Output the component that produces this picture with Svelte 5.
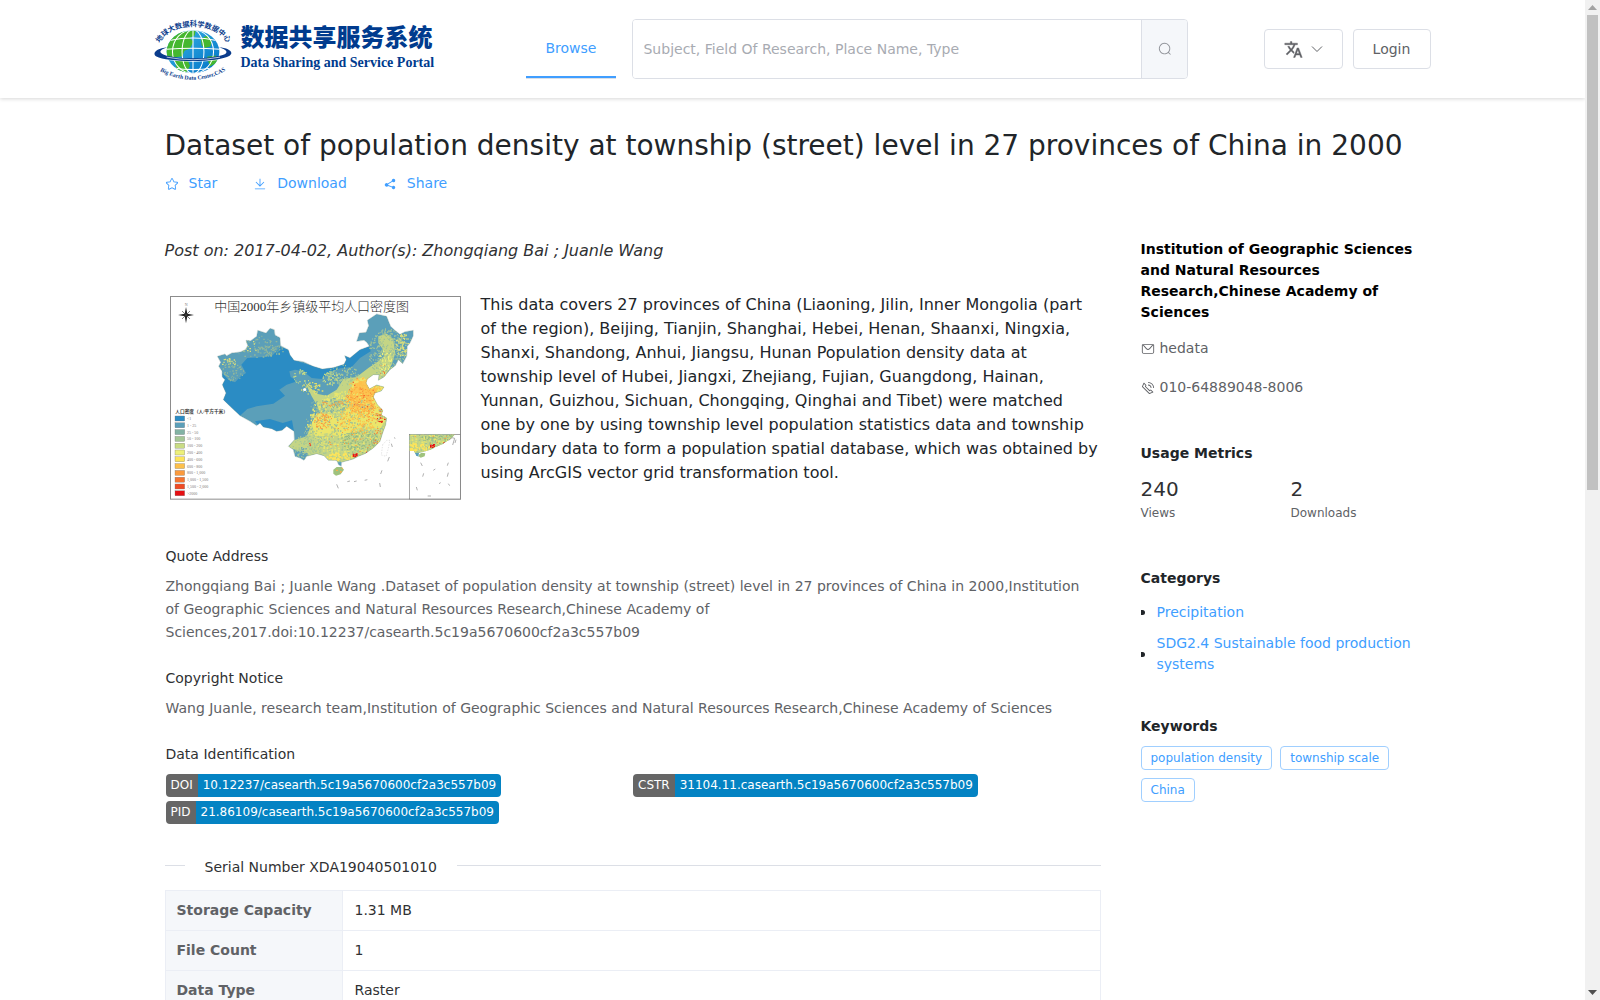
<script lang="ts">
	const icons = {
		star: 'm512 747.84 228.16 119.936a6.4 6.4 0 0 0 9.28-6.72l-43.52-254.08 184.512-179.904a6.4 6.4 0 0 0-3.52-10.88l-255.104-37.12L517.76 147.904a6.4 6.4 0 0 0-11.52 0L392.192 379.072l-255.104 37.12a6.4 6.4 0 0 0-3.52 10.88L318.08 606.976l-43.584 254.08a6.4 6.4 0 0 0 9.28 6.72zM313.6 924.48a70.4 70.4 0 0 1-102.144-74.24l37.888-220.928L88.96 472.96A70.4 70.4 0 0 1 128 352.896l221.76-32.256 99.2-200.96a70.4 70.4 0 0 1 126.208 0l99.2 200.96 221.824 32.256a70.4 70.4 0 0 1 39.04 120.064L774.72 629.376l37.888 220.928a70.4 70.4 0 0 1-102.144 74.24L512 820.096l-198.4 104.32z',
		download:
			'M160 832h704a32 32 0 1 1 0 64H160a32 32 0 1 1 0-64m384-253.696 236.288-236.352 45.248 45.248L508.8 704 192 387.2l45.248-45.248L480 584.704V128h64z',
		share: 'm679.872 348.8-301.76 188.608a127.8 127.8 0 0 1 5.12 52.16l279.936 104.96a128 128 0 1 1-22.464 59.904l-279.872-104.96a128 128 0 1 1-16.64-166.272l301.696-188.608a128 128 0 1 1 33.92 54.272z',
		search: 'm795.904 750.72 124.992 124.928a32 32 0 0 1-45.248 45.248L750.656 795.904a416 416 0 1 1 45.248-45.248zM480 832a352 352 0 1 0 0-704 352 352 0 0 0 0 704',
		message:
			'M128 224v512a64 64 0 0 0 64 64h640a64 64 0 0 0 64-64V224zm0-64h768a64 64 0 0 1 64 64v512a128 128 0 0 1-128 128H192A128 128 0 0 1 64 736V224a64 64 0 0 1 64-64M904 224 656.512 506.88a192 192 0 0 1-289.024 0L120 224zm-698.944 0 210.56 240.704a128 128 0 0 0 192.704 0L818.944 224z',
		phone: 'M79.36 432.256 591.744 944.64a32 32 0 0 0 35.2 6.784l253.44-108.544a32 32 0 0 0 9.984-52.032l-153.856-153.92a32 32 0 0 0-36.928-6.016l-69.888 34.944L358.08 394.24l35.008-69.888a32 32 0 0 0-5.952-36.928L233.152 133.568a32 32 0 0 0-52.032 10.048L72.512 397.056a32 32 0 0 0 6.784 35.2zm60.48-29.952 81.536-190.08L325.568 316.48l-24.64 49.216-20.608 41.216 32.576 32.64 271.552 271.552 32.64 32.64 41.216-20.672 49.28-24.576 104.192 104.128-190.08 81.472zM512 320v-64a256 256 0 0 1 256 256h-64a192 192 0 0 0-192-192m0-192V64a448 448 0 0 1 448 448h-64a384 384 0 0 0-384-384'
	};
	type IconName = keyof typeof icons;

	const actions: { icon: IconName; label: string }[] = [
		{ icon: 'star', label: 'Star' },
		{ icon: 'download', label: 'Download' },
		{ icon: 'share', label: 'Share' }
	];

	const identifiers = [
		{ kind: 'DOI', value: '10.12237/casearth.5c19a5670600cf2a3c557b09' },
		{ kind: 'CSTR', value: '31104.11.casearth.5c19a5670600cf2a3c557b09' },
		{ kind: 'PID', value: '21.86109/casearth.5c19a5670600cf2a3c557b09' }
	];

	const properties = [
		{ name: 'Storage Capacity', value: '1.31 MB' },
		{ name: 'File Count', value: '1' },
		{ name: 'Data Type', value: 'Raster' }
	];

	const categories = ['Precipitation', 'SDG2.4 Sustainable food production systems'];
	const keywords = ['population density', 'township scale', 'China'];

	const legend = [
		{ color: '#2b8cc4', label: '<1' },
		{ color: '#5b9fb9', label: '1 - 25' },
		{ color: '#83b3a4', label: '25 - 50' },
		{ color: '#a5c795', label: '50 - 100' },
		{ color: '#c9dc84', label: '100 - 200' },
		{ color: '#edf07a', label: '200 - 400' },
		{ color: '#fde45a', label: '400 - 600' },
		{ color: '#fdc04a', label: '600 - 800' },
		{ color: '#fb9a3c', label: '800 - 1,000' },
		{ color: '#f6742f', label: '1,000 - 1,500' },
		{ color: '#f04b24', label: '1,500 - 2,000' },
		{ color: '#e60f12', label: '>2000' }
	];

	const mainland =
		'M172 200L195 193L200 198L215 190L240 187L256 180L263 168L258 152L272 153L290 140L293 122L318 130L330 116L343 120L345 136L360 144L362 168L385 180L390 196L402 212L430 216L460 230L487 238L520 234L552 224L559 210L554 198L570 205L600 180L628 170L620 158L612 152L590 155L598 130L618 128L626 108L622 92L650 73L680 80L692 110L705 122L720 134L735 126L760 122L760 138L750 160L742 170L740 200L728 222L715 210L706 228L690 240L672 262L655 272L657 255L640 255L622 268L618 280L628 298L650 286L672 292L664 304L645 310L640 322L652 345L668 362L664 376L680 385L677 405L668 430L660 455L640 475L615 492L595 500L580 508L545 518L544 530L536 526L530 512L505 512L492 498L470 492L440 500L432 512L420 505L405 500L400 480L385 470L403 450L402 425L380 410L366 422L350 425L335 417L310 412L300 400L290 408L270 395L240 378L210 350L190 330L198 310L187 285L195 270L187 262L186 245L176 230L182 218Z';

	// small seeded generator, so the grain of the map stays the same between renders
	function mulberry(seed: number) {
		return () => {
			seed = (seed + 0x6d2b79f5) | 0;
			let t = Math.imul(seed ^ (seed >>> 15), 1 | seed);
			t = (t + Math.imul(t ^ (t >>> 7), 61 | t)) ^ t;
			return ((t ^ (t >>> 14)) >>> 0) / 4294967296;
		};
	}

	// [cx, cy, rx, ry, count, size, colour]
	const zones: [number, number, number, number, number, number, string][] = [
		[280, 170, 80, 35, 80, 5, '#8fb79c'],
		[265, 168, 40, 16, 16, 5, '#d9de7c'],
		[204, 216, 24, 12, 26, 5, '#d9de7c'],
		[215, 245, 35, 30, 60, 5, '#8fb79c'],
		[330, 180, 40, 18, 50, 5, '#8fb79c'],
		[425, 260, 26, 22, 24, 5, '#c9dc84'],
		[455, 295, 34, 18, 50, 5, '#e2df6c'],
		[510, 265, 24, 22, 50, 5, '#c9dc84'],
		[545, 255, 50, 30, 100, 5, '#a5c795'],
		[680, 190, 55, 75, 320, 5, '#9fc298'],
		[730, 165, 26, 36, 90, 5, '#d9de7c'],
		[560, 400, 120, 100, 600, 6, '#e9e66d'],
		[560, 420, 130, 95, 450, 5, '#9fc298'],
		[510, 345, 60, 22, 90, 5, '#83b3a4'],
		[600, 455, 60, 35, 130, 5, '#93b983'],
		[440, 470, 45, 35, 120, 5, '#a5c795'],
		[420, 490, 25, 20, 30, 5, '#5b9fb9'],
		[605, 320, 50, 60, 300, 5, '#fdc04a'],
		[600, 330, 45, 40, 130, 4, '#fb9a3c'],
		[645, 300, 35, 14, 50, 5, '#fdc04a'],
		[590, 390, 55, 45, 150, 5, '#fdc04a'],
		[487, 392, 28, 25, 80, 4, '#fb9a3c'],
		[515, 340, 35, 10, 30, 4, '#fb9a3c'],
		[640, 370, 35, 30, 70, 4, '#fb9a3c'],
		[600, 310, 45, 55, 20, 4, '#f04b24'],
		[663, 375, 14, 22, 20, 5, '#e6341c'],
		[655, 450, 18, 38, 20, 4, '#f6742f'],
		[580, 440, 90, 60, 40, 4, '#fb9a3c'],
		[540, 500, 40, 12, 60, 6, '#fde45a'],
		[585, 495, 10, 5, 14, 5, '#e60f12'],
		[618, 487, 5, 3, 4, 5, '#e60f12'],
		[448, 464, 4, 5, 5, 4, '#f04b24'],
		[675, 220, 20, 45, 60, 5, '#edf07a'],
		[668, 235, 14, 24, 8, 4, '#f6742f']
	];

	const rand = mulberry(2000);
	const grain = zones.map(([cx, cy, rx, ry, count, size, color]) => {
		let d = '';
		for (let i = 0; i < count; i++) {
			const a = rand() * Math.PI * 2;
			const r = Math.sqrt(rand());
			const x = Math.round(cx + Math.cos(a) * rx * r);
			const y = Math.round(cy + Math.sin(a) * ry * r);
			const w = 2 + Math.round(rand() * (size - 2));
			d += `M${x} ${y}h${w}v${size - 1}h-${w}z`;
		}
		return { d, color };
	});
</script>

{#snippet icon(name: IconName)}
	<svg class="icon" viewBox="0 0 1024 1024" aria-hidden="true"><path d={icons[name]} /></svg>
{/snippet}

{#snippet terrain()}
	<path d={mainland} fill="#5b9fb9" />
	<path
		fill="#2b8cc4"
		d="M186 250L205 270L225 278L240 262L258 250L244 225L262 205L300 203L335 200L362 172L385 180L402 212L487 238L552 224L556 200L600 180L628 170L632 185L600 205L575 232L540 236L505 250L485 268L455 265L430 245L405 240L388 245L392 262L412 275L380 285L358 300L375 318L340 342L290 350L262 358L240 378L210 350L188 330Z"
	/>
	<path fill="#2b8cc4" d="M285 395L330 388L368 400L396 392L402 425L350 430L300 415Z" />
	<path
		fill="#c4d585"
		d="M436 280L470 312L500 318L530 300L550 268L590 262L625 235L655 215L672 200L668 178L655 160L655 140L680 132L700 148L706 190L695 225L660 285L690 290L660 320L690 390L660 470L580 515L500 520L430 490L385 472L402 452L440 440L458 395L482 376L470 345L455 320Z"
	/>
	<path
		fill="#ece56a"
		d="M580 275L610 262L640 290L680 290L645 315L680 380L660 420L620 410L580 420L550 445L500 430L465 440L455 400L470 370L520 375L545 390L560 340Z"
	/>
	<path fill="#fcc653" d="M585 282L618 270L625 298L650 296L635 322L640 350L610 362L568 345L570 320Z" />
	{#each grain as patch}
		<path d={patch.d} fill={patch.color} />
	{/each}
{/snippet}

<div class="viewport">
	<div class="page">
		<header class="topbar">
			<div class="container topbar-row">
				<a class="brand" href="#home" aria-label="Data Sharing and Service Portal">
					<svg class="globe" viewBox="0 0 234 186" aria-hidden="true">
						<defs>
							<clipPath id="earth"><ellipse cx="117" cy="95" rx="77" ry="63" /></clipPath>
							<linearGradient id="sea" x1="0" y1="0" x2="1" y2="1">
								<stop offset="0" stop-color="#39b5e6" />
								<stop offset="1" stop-color="#0072c6" />
							</linearGradient>
							<path id="arc-top" d="M23 64A103 70 0 0 1 213 64" />
							<path id="arc-bottom" d="M22 152Q117 203 211 151" />
						</defs>
						<ellipse cx="117" cy="95" rx="77" ry="63" fill="url(#sea)" />
						<g clip-path="url(#earth)">
							<path
								d="M30 110L48 55L75 38L125 32L122 48L108 54L118 66L108 86L92 92L86 108L62 112ZM62 114L100 116L108 136L96 160L70 150ZM140 58L158 48L172 60L168 80L150 84L142 76ZM158 110L184 106L190 126L166 138Z"
								fill="#45b72f"
							/>
							<g fill="none" stroke="#fff" stroke-width="3">
								<path d="M117 30V160" />
								<ellipse cx="117" cy="95" rx="32" ry="64" />
								<ellipse cx="117" cy="95" rx="60" ry="64" />
								<path d="M48 62Q117 48 186 62M38 88Q117 82 196 88M42 118Q117 128 192 118M60 143Q117 152 174 143" />
							</g>
						</g>
						<path
							d="M42 82C8 86-4 100 10 109C40 126 190 128 224 107C238 97 222 84 192 82C226 92 218 102 196 107C150 117 80 117 40 107C16 100 14 91 42 82Z"
							fill="#0a3c8c"
						/>
						<path d="M40 111Q117 126 196 111" fill="none" stroke="#fff" stroke-width="2" />
						<text class="globe-cn"><textPath href="#arc-top" startOffset="50%">地球大数据科学数据中心</textPath></text>
						<text class="globe-en"><textPath href="#arc-bottom" startOffset="50%">Big Earth Data Center,CAS</textPath></text>
					</svg>
					<span class="brand-text">
						<span class="brand-cn">数据共享服务系统</span>
						<span class="brand-en">Data Sharing and Service Portal</span>
					</span>
				</a>

				<nav class="menu">
					<a class="menu-item" href="#browse">Browse</a>
				</nav>

				<form class="search" role="search">
					<input
						type="text"
						aria-label="Search datasets"
						placeholder="Subject, Field Of Research, Place Name, Type"
					/>
					<button type="button" aria-label="Search">{@render icon('search')}</button>
				</form>

				<div class="account">
					<button class="btn" type="button" aria-label="Language">
						<svg class="translate" viewBox="0 0 24 24" aria-hidden="true">
							<path
								d="M12.87 15.07l-2.54-2.51.03-.03c1.74-1.94 2.98-4.17 3.71-6.53H17V4h-7V2H8v2H1v1.99h11.17C11.5 7.92 10.44 9.75 9 11.35 8.07 10.32 7.3 9.19 6.69 8h-2c.73 1.63 1.73 3.17 2.98 4.56l-5.09 5.02L4 19l5-5 3.11 3.11.76-2.04zM18.5 10h-2L12 22h2l1.12-3h4.75L21 22h2l-4.5-12zm-2.62 7l1.62-4.33L19.12 17h-3.24z"
							/>
						</svg>
						<svg class="chevron" viewBox="0 0 12 12" aria-hidden="true"><path d="M1 3.5L6 8.5L11 3.5" /></svg>
					</button>
					<button class="btn" type="button">Login</button>
				</div>
			</div>
		</header>

		<main class="container content">
			<h1>Dataset of population density at township (street) level in 27 provinces of China in 2000</h1>
			<div class="actions">
				{#each actions as action}
					<a href="#{action.icon}">{@render icon(action.icon)}{action.label}</a>
				{/each}
			</div>

			<div class="columns">
				<article>
					<p class="byline">Post on: 2017-04-02, Author(s): Zhongqiang Bai ; Juanle Wang</p>

					<div class="summary">
						<svg class="map" viewBox="30 19 873 611" role="img" aria-label="中国2000年乡镇级平均人口密度图">
							<defs>
								<clipPath id="china"><path d={mainland} /></clipPath>
								<clipPath id="inset"><rect x="749" y="435" width="152" height="193" /></clipPath>
							</defs>
							<rect x="31.5" y="20.5" width="870" height="608" fill="#fff" stroke="#8c8c8c" stroke-width="3" />
							<text class="map-title" x="455" y="64">中国2000年乡镇级平均人口密度图</text>
							<text class="map-small" x="74" y="48">N</text>
							<path d="M78 52L82 72L102 76L82 80L78 101L74 80L54 76L74 72Z" fill="#222" />
							<path d="M66 64L90 88M90 64L66 88" stroke="#444" stroke-width="2" />

							<g clip-path="url(#china)">{@render terrain()}</g>
							<path d={mainland} fill="none" stroke="#7f9a92" stroke-width="1" />
							<ellipse cx="434" cy="300" rx="5" ry="4" fill="#fff" />
							<path d="M520 540L530 532L545 532L552 540L542 554L528 558L520 552Z" fill="#9fc27d" />
							<path d="M528 540h6v4h-6zM540 544h5v5h-5zM545 534h4v3h-4z" fill="#f6b24a" />
							<path
								d="M668 465L680 452L690 452L684 480L678 500L664 496Z"
								fill="none"
								stroke="#aaa"
								stroke-dasharray="4 4"
							/>
							<path
								d="M694 462L697 472M702 444l4 2M688 502L683 515M666 542L662 553M659 580L661 592M530 584L535 596M562 576l8-2M582 576l8-2M614 572l8-2"
								stroke="#888"
								stroke-width="2"
							/>

							<text class="map-caption" x="46" y="369">人口密度（人/平方千米）</text>
							{#each legend as entry, i}
								<rect x="45" y={379 + i * 20.4} width="29" height="15" fill={entry.color} stroke="#777" />
								<text class="map-small" x="81" y={391 + i * 20.4}>{entry.label}</text>
							{/each}

							<rect x="748" y="434" width="153" height="194" fill="#fff" stroke="#777" stroke-width="2" />
							<g clip-path="url(#inset)">
								<g transform="translate(232 -28)">
									<g clip-path="url(#china)">{@render terrain()}</g>
								</g>
								<path d="M778 494L785 489L796 491L794 500L782 504L776 500Z" fill="#9fc27d" />
								<path
									d="M866 452l10-8 8 2-6 20M888 450l-3 10M782 519l5 10M865 519l-3 9M865 549l-3 12M791 551l-3 10M769 592l3 10M837 582l5-3M865 582l4 6M803 619l10 0M820 542l6-4"
									fill="none"
									stroke="#888"
									stroke-width="2"
								/>
							</g>
						</svg>
						<p>
							This data covers 27 provinces of China (Liaoning, Jilin, Inner Mongolia (part of the region),
							Beijing, Tianjin, Shanghai, Hebei, Henan, Shaanxi, Ningxia, Shanxi, Shandong, Anhui, Jiangsu,
							Hunan Population density data at township level of Hubei, Jiangxi, Zhejiang, Fujian, Guangdong,
							Hainan, Yunnan, Guizhou, Sichuan, Chongqing, Qinghai and Tibet) were matched one&nbsp;by one by
							using township level population statistics data and township boundary data to form a
							population spatial database, which was obtained by using ArcGIS vector grid transformation
							tool.
						</p>
					</div>

					<section class="note">
						<h2>Quote Address</h2>
						<p>
							Zhongqiang Bai ; Juanle Wang .Dataset of population density at township (street) level in 27
							provinces of China in 2000,Institution of&nbsp;Geographic Sciences and Natural Resources
							Research,Chinese Academy of Sciences,2017.doi:10.12237/casearth.5c19a5670600cf2a3c557b09
						</p>
					</section>
					<section class="note">
						<h2>Copyright Notice</h2>
						<p>
							Wang Juanle, research team,Institution of Geographic Sciences and Natural Resources
							Research,Chinese Academy of Sciences
						</p>
					</section>
					<section class="note">
						<h2>Data Identification</h2>
						<div class="badges">
							{#each identifiers as id}
								<div class="badge"><span class="kind">{id.kind}</span><span class="value">{id.value}</span></div>
							{/each}
						</div>
					</section>

					<div class="divider"><span>Serial Number XDA19040501010</span></div>

					<table>
						<tbody>
							{#each properties as row}
								<tr>
									<th scope="row">{row.name}</th>
									<td>{row.value}</td>
								</tr>
							{/each}
						</tbody>
					</table>
				</article>

				<aside>
					<section class="contact">
						<h2>Institution of Geographic Sciences and Natural Resources Research,Chinese Academy of Sciences</h2>
						<p>{@render icon('message')}hedata</p>
						<p>{@render icon('phone')}010-64889048-8006</p>
					</section>
					<section>
						<h2>Usage Metrics</h2>
						<dl>
							<div><dd>240</dd><dt>Views</dt></div>
							<div><dd>2</dd><dt>Downloads</dt></div>
						</dl>
					</section>
					<section>
						<h2>Categorys</h2>
						<ul class="categories">
							{#each categories as category}
								<li><a href="#category">{category}</a></li>
							{/each}
						</ul>
					</section>
					<section>
						<h2>Keywords</h2>
						<div class="tags">
							{#each keywords as keyword}
								<span class="tag">{keyword}</span>
							{/each}
						</div>
					</section>
				</aside>
			</div>
		</main>
	</div>

	<div class="scrollbar" aria-hidden="true">
		<svg viewBox="0 0 15 15"><path d="M3 10L7.5 5L12 10Z" fill="#a3a3a3" /></svg>
		<div class="track"><div class="thumb"></div></div>
		<svg viewBox="0 0 15 15"><path d="M3 5L7.5 10L12 5Z" fill="#505050" /></svg>
	</div>
</div>

<style>
	:global(body) {
		margin: 0;
		background: #fff;
		color: #212529;
		font-family: 'DejaVu Sans', 'Noto Sans CJK SC', sans-serif;
		font-size: 14px;
		line-height: 21px;
	}

	:global(*) {
		box-sizing: border-box;
	}

	a {
		color: #409eff;
		text-decoration: none;
	}

	h1,
	h2,
	p,
	ul,
	dl,
	dd {
		margin: 0;
		padding: 0;
	}

	button,
	input {
		font: inherit;
	}

	.viewport {
		display: flex;
		height: 100vh;
		overflow: hidden;
	}

	.page {
		flex: 1;
		min-width: 0;
		overflow: hidden;
	}

	.container {
		max-width: 1280px;
		margin: 0 auto;
	}

	.icon {
		width: 14px;
		height: 14px;
		flex: none;
		fill: currentColor;
	}

	/* top bar */
	.topbar {
		background: #fff;
		box-shadow: 0 1px 4px rgba(0, 0, 0, 0.16);
	}

	.topbar-row {
		display: grid;
		grid-template-columns: 373px auto minmax(0, 556px) 1fr;
		align-items: center;
		height: 98px;
	}

	.brand {
		display: flex;
		align-items: center;
		gap: 8px;
		color: #003b8e;
	}

	.globe {
		width: 80px;
		height: 64px;
		margin-top: 4px;
	}

	.globe-cn,
	.globe-en {
		fill: #0a3c8c;
		text-anchor: middle;
		font-weight: 700;
	}

	.globe-cn {
		font-family: 'Noto Sans CJK SC', sans-serif;
		font-size: 21px;
	}

	.globe-en {
		font-family: 'Liberation Serif', serif;
		font-size: 17px;
	}

	.brand-text {
		display: flex;
		flex-direction: column;
	}

	.brand-cn {
		font-family: 'Noto Sans CJK SC', sans-serif;
		font-size: 24px;
		font-weight: 900;
		line-height: 28px;
	}

	.brand-en {
		font-family: 'Liberation Serif', serif;
		font-size: 14px;
		font-weight: 700;
		line-height: 26px;
	}

	.menu {
		height: 60px;
		margin-right: 16px;
		border-bottom: 1px solid #dcdfe6;
	}

	.menu-item {
		display: block;
		height: 59px;
		padding: 0 20px;
		border-bottom: 2px solid #409eff;
		line-height: 58px;
	}

	.search {
		display: flex;
		height: 60px;
		border: 1px solid #dcdfe6;
		border-radius: 4px;
		overflow: hidden;
	}

	.search input {
		flex: 1;
		min-width: 0;
		padding: 0 10px;
		border: 0;
		outline: 0;
		color: #606266;
	}

	.search input::placeholder {
		color: #a8abb2;
		opacity: 1;
	}

	.search button {
		display: grid;
		place-items: center;
		width: 46px;
		padding: 0;
		border: 0;
		border-left: 1px solid #dcdfe6;
		background: #f5f7fa;
		color: #909399;
	}

	.account {
		display: flex;
		justify-content: flex-end;
		gap: 10px;
		padding-right: 2px;
	}

	.btn {
		display: flex;
		align-items: center;
		justify-content: center;
		gap: 8px;
		min-width: 78px;
		height: 40px;
		padding: 0 19px;
		border: 1px solid #dcdfe6;
		border-radius: 4px;
		background: #fff;
		color: #606266;
	}

	.translate {
		width: 19px;
		height: 19px;
		fill: currentColor;
		stroke: currentColor;
		stroke-width: 0.5;
	}

	.chevron {
		width: 12px;
		height: 12px;
		fill: none;
		stroke: currentColor;
	}

	/* dataset */
	.content {
		padding: 31px 12px 0;
	}

	h1 {
		font-size: 28px;
		font-weight: 400;
		line-height: 34px;
	}

	.actions {
		display: flex;
		gap: 36px;
		margin-top: 10px;
	}

	.actions a {
		display: flex;
		align-items: center;
		gap: 10px;
	}

	.columns {
		display: grid;
		grid-template-columns: minmax(0, 936fr) minmax(0, 280fr);
		gap: 40px;
		margin-top: 45px;
	}

	.byline {
		color: #303133;
		font-size: 16px;
		font-style: italic;
		line-height: 24px;
	}

	.summary {
		display: grid;
		grid-template-columns: 291px minmax(0, 1fr);
		gap: 20px;
		margin-top: 30px;
		padding-left: 5px;
		font-size: 16px;
		line-height: 24px;
	}

	.map {
		width: 100%;
		margin-top: 3px;
	}

	.map-title,
	.map-caption,
	.map-small {
		font-family: 'Liberation Serif', 'Noto Sans CJK SC', serif;
		fill: #333;
	}

	.map-title {
		font-size: 39px;
		font-weight: 300;
		text-anchor: middle;
	}

	.map-caption {
		font-size: 14px;
		font-weight: 700;
	}

	.map-small {
		font-size: 12px;
		fill: #777;
	}

	.note {
		margin-top: 24px;
		padding-left: 1px;
	}

	.summary + .note {
		margin-top: 46px;
	}

	.note h2 {
		color: #303133;
		font-size: 14px;
		font-weight: 400;
		line-height: 21px;
	}

	.note p {
		margin-top: 8px;
		color: #606266;
		line-height: 23px;
	}

	.badges {
		display: grid;
		grid-template-columns: 1fr 1fr;
		gap: 4px 0;
		margin-top: 9px;
	}

	.badge {
		display: flex;
		justify-self: start;
		border-radius: 4px;
		overflow: hidden;
		color: #fff;
		font-size: 12px;
		line-height: 23px;
	}

	.badge span {
		padding: 0 5px;
	}

	.kind {
		background: #666;
	}

	.value {
		background: #0483c3;
	}

	.divider {
		display: flex;
		align-items: center;
		gap: 20px;
		margin: 30px 0 12px;
		color: #303133;
	}

	.divider span {
		padding-top: 3px;
	}

	.divider::before,
	.divider::after {
		content: '';
		width: 20px;
		border-top: 1px solid #dcdfe6;
	}

	.divider::after {
		flex: 1;
	}

	table {
		width: 100%;
		border-collapse: collapse;
		table-layout: fixed;
	}

	th,
	td {
		height: 40px;
		padding: 0 12px;
		border: 1px solid #ebeef5;
		text-align: left;
	}

	th {
		width: 177px;
		padding: 0 11px;
		background: #f5f7fa;
		color: #606266;
	}

	td {
		color: #303133;
	}

	/* side column */
	aside section {
		margin-bottom: 41px;
	}

	aside h2 {
		font-size: 14px;
		font-weight: 700;
		line-height: 21px;
	}

	aside .contact {
		margin-bottom: 45px;
		color: #606266;
	}

	.contact h2 {
		color: #000;
	}

	.contact p {
		display: flex;
		align-items: center;
		gap: 5px;
		margin-top: 18px;
	}

	.contact h2 + p {
		margin-top: 15px;
	}

	dl {
		display: grid;
		grid-template-columns: 150px 1fr;
		margin-top: 11px;
		padding-bottom: 4px;
	}

	dl div {
		display: flex;
		flex-direction: column;
	}

	dd {
		color: #303133;
		font-size: 20px;
		line-height: 28px;
	}

	dt {
		color: #606266;
		font-size: 12px;
		line-height: 20px;
	}

	.categories {
		display: grid;
		gap: 10px;
		margin-top: 13px;
		list-style: none;
	}

	.categories li {
		display: flex;
		align-items: center;
		gap: 12px;
	}

	.categories li::before {
		content: '';
		flex: none;
		width: 4px;
		height: 5px;
		border-radius: 0 3px 3px 0;
		background: #212529;
	}

	.tags {
		display: flex;
		flex-wrap: wrap;
		gap: 8px;
		margin-top: 9px;
	}

	.tag {
		padding: 0 9px;
		border: 1px solid #a0cfff;
		border-radius: 4px;
		color: #409eff;
		font-size: 12px;
		line-height: 22px;
	}

	/* window scrollbar */
	.scrollbar {
		display: flex;
		flex-direction: column;
		width: 15px;
		background: #f1f1f1;
	}

	.scrollbar svg {
		width: 15px;
		height: 15px;
	}

	.track {
		flex: 1;
		padding: 0 2px;
	}

	.thumb {
		height: 49%;
		background: #c1c1c1;
	}
</style>
